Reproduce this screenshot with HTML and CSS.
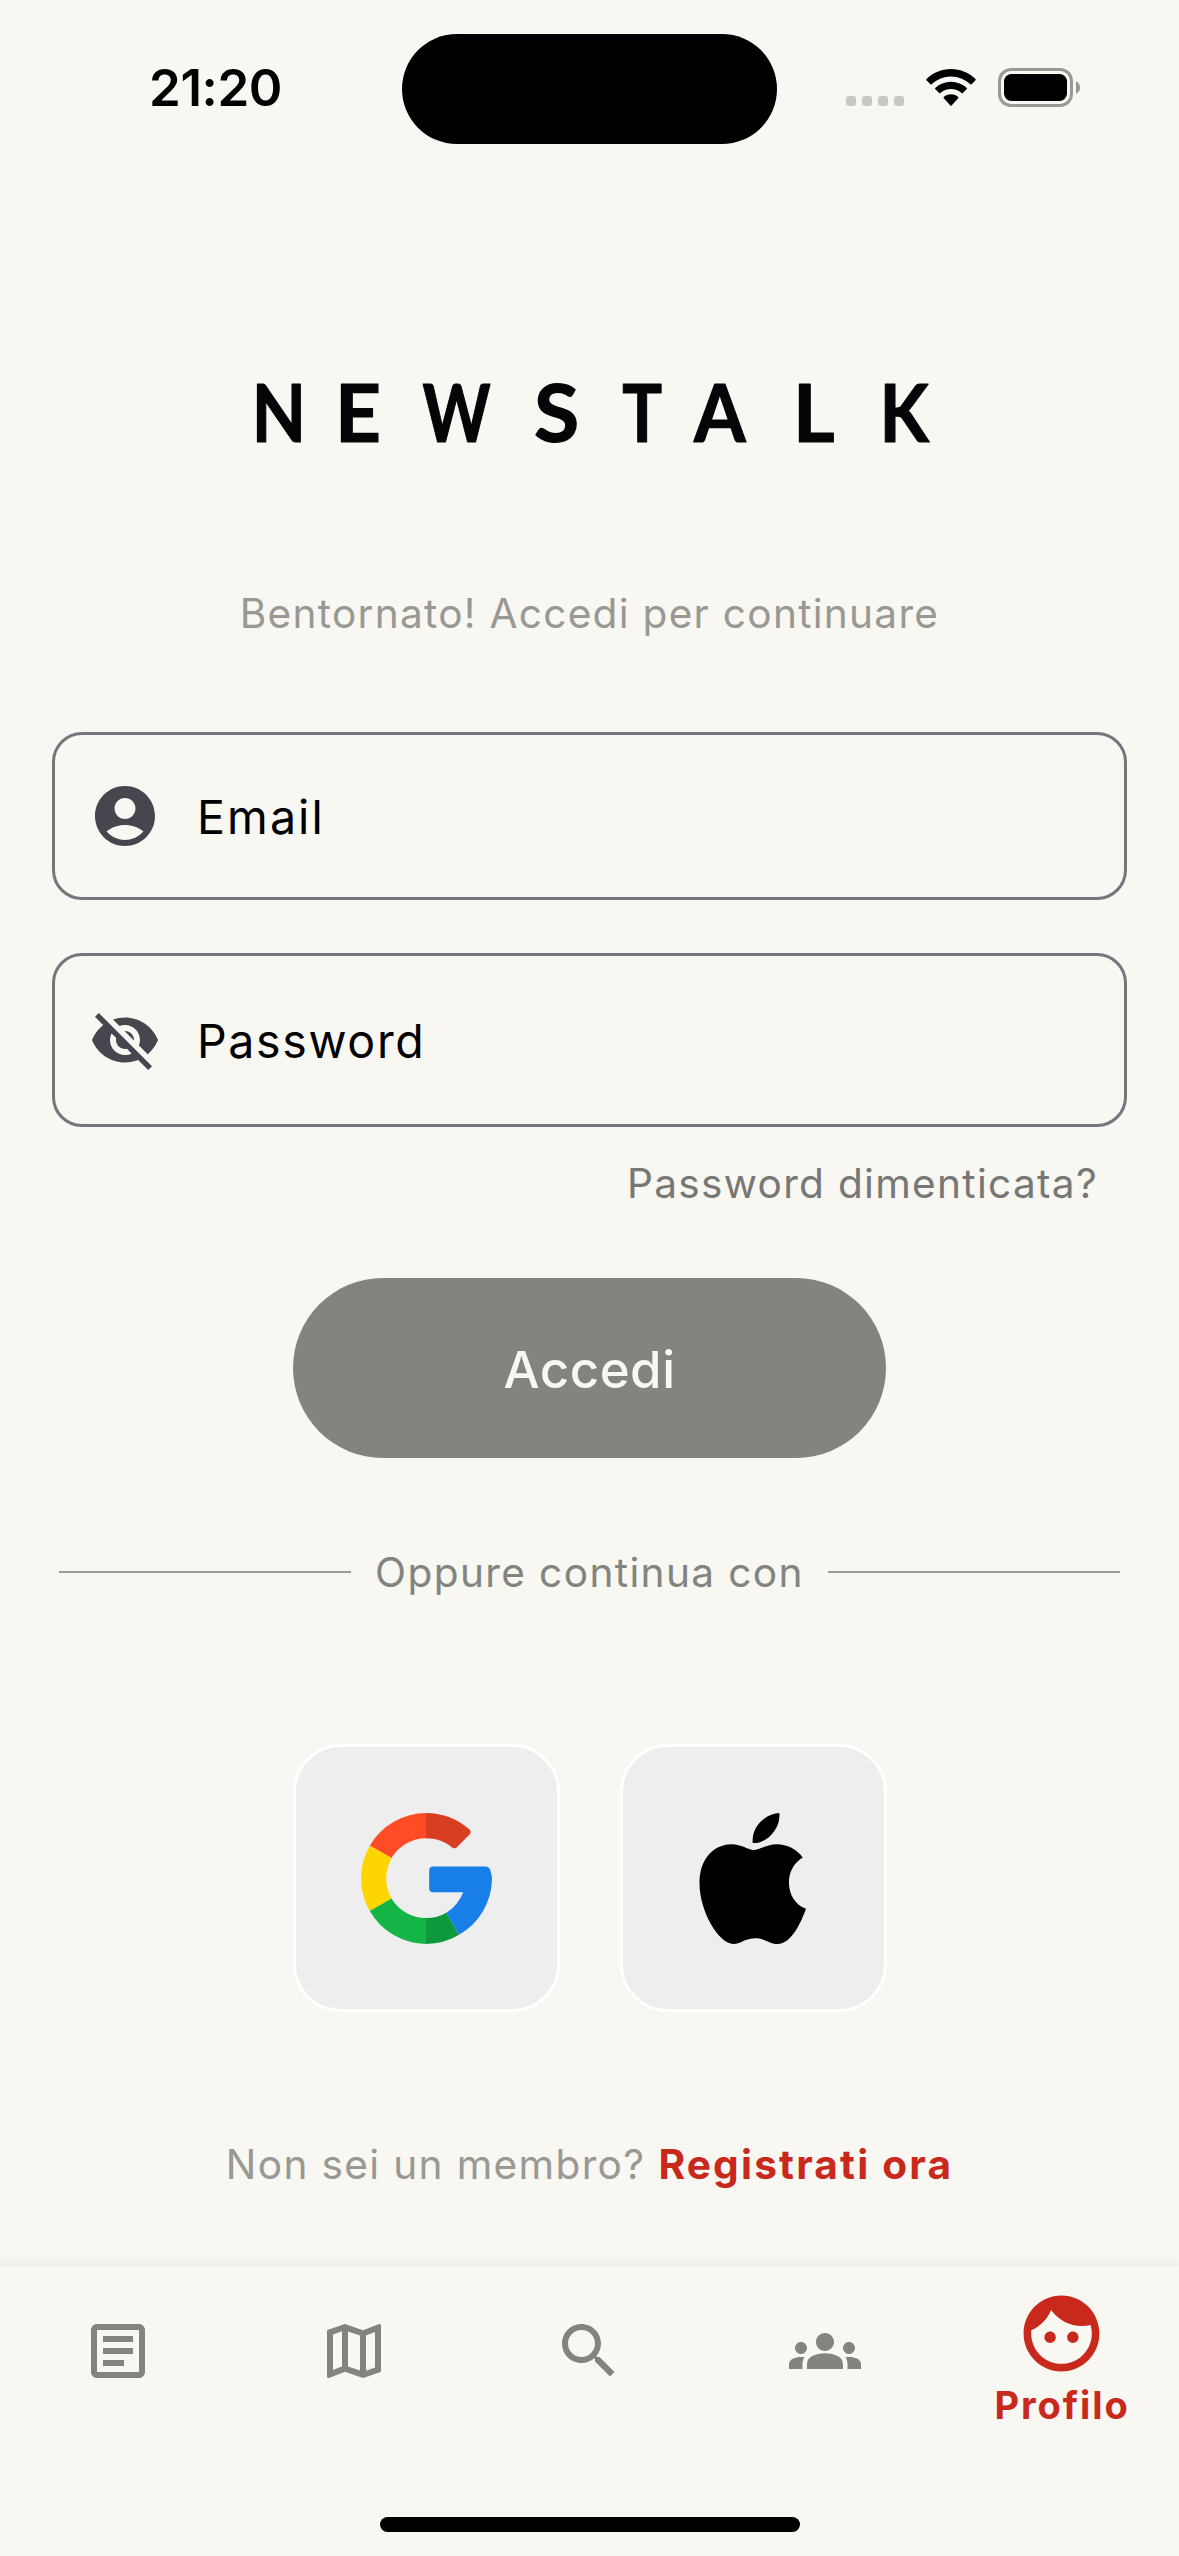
FILE: index.html
```
<!DOCTYPE html>
<html lang="it">
<head>
<meta charset="utf-8">
<title>Newstalk – Accedi</title>
<link rel="stylesheet" href="styles.css">
</head>
<body>
<div class="screen">
  <header class="status">
    <span class="status-time">21:20</span>
    <div class="island"></div>
    <div class="signal"><i></i><i></i><i></i><i></i></div>
    <svg class="wifi" width="50" height="37" viewBox="0 0 50 37">
      <path d="M25 0C34.5 0 43 3.7 49.5 10Q50 10.7 49.5 11.3L45.6 15.2Q45 15.7 44.3 15.2C39 10.2 32.3 7.4 25 7.4C17.7 7.4 11 10.2 5.7 15.2Q5 15.7 4.4 15.2L.5 11.3Q0 10.7 .5 10C7 3.7 15.5 0 25 0Z"/>
      <path d="M25 12.7C31 12.7 36.5 15 40.8 18.9Q41.3 19.5 40.8 20.1L36.8 24.1Q36.2 24.6 35.6 24.1C32.7 21.5 29 20 25 20C21 20 17.3 21.5 14.4 24.1Q13.8 24.6 13.2 24.1L9.2 20.1Q8.7 19.5 9.2 18.9C13.5 15 19 12.7 25 12.7Z"/>
      <path d="M25 25.3C27.9 25.3 30.4 26.3 32.2 28Q32.8 28.6 32.2 29.2L25.6 36.5Q25 37 24.4 36.5L17.8 29.2Q17.2 28.6 17.8 28C19.6 26.3 22.1 25.3 25 25.3Z"/>
    </svg>
    <svg class="battery" width="83" height="39" viewBox="0 0 83 39">
      <rect x="1.5" y="1.5" width="72" height="36" rx="11.5" fill="none" stroke="#999893" stroke-width="3"/>
      <rect x="6" y="6" width="63" height="27" rx="7.5"/>
      <path d="M78 13.3C80.5 14.4 82 16.800 82 19.500S80.500 24.600 78 25.700Z" fill="#999893"/>
    </svg>
  </header>

  <main class="content">
    <svg class="logo" width="690" height="110" viewBox="245 357 690 110" role="img" aria-label="NEWSTALK">
      <text transform="translate(251.7 442) scale(.88 1)">N</text>
      <text transform="translate(335 442)">E</text>
      <text transform="translate(422.5 442) scale(.81 1)">W</text>
      <text transform="translate(534 442) scale(1.03 1)">S</text>
      <text transform="translate(622.2 442) scale(.83 1)">T</text>
      <text transform="translate(694 442) scale(.93 1)">A</text>
      <text transform="translate(793 442)">L</text>
      <text transform="translate(879.6 442) scale(.9 1)">K</text>
    </svg>

    <p class="tagline">Bentornato! Accedi per continuare</p>

    <form class="form">
      <div class="field">
        <svg class="icon" viewBox="0 0 24 24"><path d="M12 2C6.48 2 2 6.48 2 12s4.48 10 10 10 10-4.48 10-10S17.52 2 12 2zm0 4c1.93 0 3.5 1.57 3.5 3.5S13.93 13 12 13s-3.5-1.57-3.5-3.5S10.07 6 12 6zm0 14c-2.03 0-4.43-.82-6.14-2.88C7.55 15.8 9.68 15 12 15s4.45.8 6.14 2.12C16.43 19.18 14.03 20 12 20z"/></svg>
        <span class="field-label email">Email</span>
      </div>
      <div class="field password-field">
        <svg class="icon" viewBox="0 0 24 24"><path d="M12 7c2.76 0 5 2.24 5 5 0 .65-.13 1.26-.36 1.83l2.92 2.92c1.51-1.26 2.7-2.89 3.43-4.75-1.73-4.39-6-7.5-11-7.5-1.4 0-2.74.25-3.98.7l2.16 2.16C10.74 7.13 11.35 7 12 7zM2 4.27l2.28 2.28.46.46C3.08 8.3 1.78 10.02 1 12c1.73 4.39 6 7.5 11 7.5 1.55 0 3.03-.3 4.38-.84l.42.42L19.73 22 21 20.73 3.27 3 2 4.27zM7.53 9.8l1.55 1.55c-.05.21-.08.43-.08.65 0 1.66 1.34 3 3 3 .22 0 .44-.03.65-.08l1.55 1.55c-.67.33-1.41.53-2.2.53-2.76 0-5-2.24-5-5 0-.79.2-1.53.53-2.2zm4.31-.78l3.15 3.15.02-.16c0-1.66-1.34-3-3-3l-.17.01z"/></svg>
        <span class="field-label">Password</span>
      </div>
      <a class="forgot">Password dimenticata?</a>
      <button class="submit" type="button">Accedi</button>
    </form>

    <div class="divider"><hr><span>Oppure continua con</span><hr></div>

    <div class="social">
      <button class="social-button" type="button" aria-label="Google">
        <svg width="131" height="131" viewBox="0 0 131 131">
          <path fill="#ff4c27" d="M8.8 32.7A65.5 65.5 0 0 1 65.5 0V25.2A40.3 40.3 0 0 0 30.5 45Z"/>
          <path fill="#d83f22" d="M65 0C82 0 97 6.2 108.3 16.3Q111 19 108.5 21.6L95.6 34.4Q93.3 36.4 90.8 34.2C83.5 28 75 25.2 65 25.2Z"/>
          <path fill="#ffd500" d="M8.8 32.7A65.5 65.5 0 0 0 8.8 98.2L30.7 85.6A40 40 0 0 1 30.7 45.2Z"/>
          <path fill="#14b447" d="M8.8 98A65.5 65.5 0 0 0 65.5 131V105A40 40 0 0 1 30.5 85.6Z"/>
          <path fill="#0f993e" d="M65 131A65.5 65.5 0 0 0 98 121.8L85.4 99.8A40 40 0 0 1 65 105Z"/>
          <path fill="#187ee8" d="M72 53.6H124Q128.3 53.6 129.3 57.3C130.3 61 131 63 131 67A65.5 65.5 0 0 1 98 121.8L85.4 99.8Q97 92.5 102.3 79.3H72Q68.2 79.3 68.2 75.5V57.4Q68.2 53.6 72 53.6Z"/>
        </svg>
      </button>
      <button class="social-button" type="button" aria-label="Apple">
        <svg width="131" height="131" viewBox="-11 0 131 131">
          <path d="M80.3 0C66.5.8 52.2 13.5 53.7 30C68 31 82 15.5 80.3 0Z"/>
          <path d="M54.7 37C49.5 37 42 31.3 32.6 31.3C16 31.3.5 44.5 .5 70.3C.5 98 19.5 131 34.5 131C42 131 46 125.3 56.3 125.3C66.5 125.3 70 131 78.4 131C93 131 102.5 108 107 95.8C96 91.8 89.9 81.5 89.9 69.3C89.9 59.5 94.8 50 103.7 44.6C98 36 88 31.2 78 31.2C67.5 31.2 60.5 37 54.7 37Z"/>
        </svg>
      </button>
    </div>

    <p class="signup"><span>Non sei un membro?</span><a>Registrati ora</a></p>
  </main>

  <nav class="nav">
    <div class="tabs">
      <a class="tab"><svg class="icon" viewBox="0 0 24 24"><path d="M19 5v14H5V5h14m0-2H5c-1.1 0-2 .9-2 2v14c0 1.1.9 2 2 2h14c1.1 0 2-.9 2-2V5c0-1.1-.9-2-2-2zM14 17H7v-2h7v2zm3-4H7v-2h10v2zm0-4H7V7h10v2z"/></svg></a>
      <a class="tab"><svg class="icon" viewBox="0 0 24 24"><path d="M20.5 3l-.16.03L15 5.1 9 3 3.36 4.9c-.21.07-.36.25-.36.48V20.5c0 .28.22.5.5.5l.16-.03L9 18.9l6 2.1 5.64-1.9c.21-.07.36-.25.36-.48V3.5c0-.28-.22-.5-.5-.5zM10 5.47l4 1.4v11.66l-4-1.4V5.47zm-5 .99l3-1.01v11.7l-3 1.16V6.46zm14 11.08l-3 1.01V6.86l3-1.16v11.84z"/></svg></a>
      <a class="tab"><svg class="icon" viewBox="0 0 24 24"><path d="M15.5 14h-.79l-.28-.27C15.41 12.59 16 11.11 16 9.5 16 5.91 13.09 3 9.5 3S3 5.91 3 9.5 5.91 16 9.5 16c1.61 0 3.09-.59 4.23-1.57l.27.28v.79l5 4.99L20.49 19l-4.99-5zm-6 0C7.01 14 5 11.99 5 9.5S7.01 5 9.5 5 14 7.01 14 9.5 11.99 14 9.5 14z"/></svg></a>
      <a class="tab"><svg class="icon" viewBox="0 0 24 24"><path d="M12 12.75c1.63 0 3.07.39 4.24.9 1.08.48 1.76 1.56 1.76 2.73V18H6v-1.61c0-1.18.68-2.26 1.76-2.73 1.17-.52 2.61-.91 4.24-.91zM4 13c1.1 0 2-.9 2-2s-.9-2-2-2-2 .9-2 2 .9 2 2 2zm1.13 1.1c-.37-.06-.74-.1-1.13-.1-.99 0-1.93.21-2.78.58C.48 14.9 0 15.62 0 16.43V18h4.5v-1.61c0-.83.23-1.61.63-2.29zM20 13c1.1 0 2-.9 2-2s-.9-2-2-2-2 .9-2 2 .9 2 2 2zm4 3.43c0-.81-.48-1.53-1.22-1.85-.85-.37-1.79-.58-2.78-.58-.39 0-.76.04-1.13.1.4.68.63 1.46.63 2.29V18H24v-1.57zM12 6c1.66 0 3 1.34 3 3s-1.34 3-3 3-3-1.34-3-3 1.34-3 3-3z"/></svg></a>
      <a class="tab active"><svg class="icon" viewBox="0 0 24 24"><path d="M9 11.5c-.83 0-1.5.67-1.5 1.5s.67 1.5 1.5 1.5 1.5-.67 1.5-1.5-.67-1.5-1.5-1.5zm6 0c-.83 0-1.5.67-1.5 1.5s.67 1.5 1.5 1.5 1.5-.67 1.5-1.5-.67-1.5-1.5-1.5z"/><path fill-rule="evenodd" d="M12 2C6.48 2 2 6.48 2 12s4.48 10 10 10 10-4.48 10-10S17.52 2 12 2zm0 18c-4.41 0-8-3.59-8-8 0-.29.02-.58.05-.86 2.36-1.05 4.23-2.98 5.21-5.37C11.07 8.33 14.05 10 17.42 10c.78 0 1.53-.09 2.25-.26.21.71.33 1.47.33 2.26 0 4.41-3.59 8-8 8z"/></svg><span>Profilo</span></a>
    </div>
    <div class="home-bar"></div>
  </nav>
</div>
</body>
</html>
```
FILE: styles.css
```
* {
  box-sizing: border-box;
}

body {
  margin: 0;
  background: #f8f7f2;
  font-family: "Inter", "Liberation Sans", sans-serif;
  color: #000;
}

p {
  margin: 0;
}

button {
  font: inherit;
  border: 0;
  padding: 0;
}

svg {
  display: block;
  flex: none;
}

.screen {
  width: 1179px;
  height: 2556px;
  display: flex;
  flex-direction: column;
  overflow: hidden;
}

/* Status bar */
.status {
  height: 144px;
  padding: 33px 0 0 149px;
  display: flex;
  align-items: center;
}

.status-time {
  width: 253px;
  padding-bottom: 2px;
  font-size: 51px;
  font-weight: 600;
  line-height: 60px;
  letter-spacing: -0.4px;
}

.island {
  width: 375px;
  height: 110px;
  margin-top: 1px;
  border-radius: 55px;
  background: #000;
}

.signal {
  display: flex;
  gap: 6px;
  margin: 24px 22px 0 69px;
}

.signal i {
  width: 10px;
  height: 10px;
  border-radius: 3px;
  background: #c8c7c3;
}

.wifi,
.battery {
  margin-bottom: 2px;
}

.battery {
  margin-left: 22px;
}

/* Login content */
.content {
  height: 2122px;
  display: flex;
  flex-direction: column;
  align-items: center;
}

.logo {
  margin-top: 213px;
}

.logo text {
  font-family: "Lato", sans-serif;
  font-size: 80px;
  font-weight: 700;
  fill: #040507;
  stroke: #040507;
  stroke-width: 1.2px;
  stroke-linejoin: round;
}

.tagline {
  margin-top: 122px;
  font-size: 40.6px;
  line-height: 50px;
  letter-spacing: 1.28px;
  color: #999892;
}

.form {
  width: 1075px;
  margin-top: 93px;
  display: flex;
  flex-direction: column;
}

.field {
  height: 168px;
  padding-left: 34px;
  display: flex;
  align-items: center;
  gap: 36px;
  border: 3px solid #79747e;
  border-radius: 30px;
}

.field .icon {
  fill: #49454f;
}

.icon {
  width: 72px;
  height: 72px;
}

.field-label {
  padding-top: 2px;
  font-size: 46.5px;
  line-height: 56px;
  letter-spacing: 1.65px;
}

.field-label.email {
  letter-spacing: 2.1px;
}

.password-field {
  height: 174px;
  margin-top: 53px;
}

.forgot {
  align-self: flex-end;
  margin: 32px 29px 0 0;
  font-size: 40.6px;
  line-height: 50px;
  letter-spacing: 1.31px;
  color: #777775;
}

.submit {
  align-self: center;
  width: 593px;
  height: 180px;
  margin-top: 69px;
  padding-top: 2px;
  border-radius: 90px;
  background: #838380;
  color: #f8f7f2;
  font-size: 51px;
  font-weight: 550;
  letter-spacing: 0.5px;
}

.divider {
  width: 1061px;
  height: 50px;
  margin-top: 89px;
  display: flex;
  align-items: center;
  gap: 24px;
  font-size: 40.6px;
  line-height: 50px;
  letter-spacing: 1.38px;
  color: #838380;
}

.divider span {
  padding-top: 2px;
}

.divider hr {
  flex: 1;
  height: 2px;
  margin: 0;
  border: 0;
  background: #9c9c98;
}

.social {
  margin-top: 147px;
  display: flex;
  gap: 60px;
}

.social-button {
  width: 267px;
  height: 268px;
  display: grid;
  place-items: center;
  border: 3px solid #fff;
  border-radius: 48px;
  background: #eee;
}

.signup {
  margin-top: 128px;
  display: flex;
  gap: 13px;
  font-size: 40.6px;
  line-height: 50px;
  letter-spacing: 1.35px;
  color: #999892;
}

.signup a {
  font-weight: 700;
  letter-spacing: 2.2px;
  color: #c9291c;
}

/* Bottom navigation */
.nav {
  height: 290px;
  background: #f8f7f2;
  box-shadow: 0 -1px 9px 2px rgba(0, 0, 0, 0.06);
}

.tabs {
  height: 251px;
  display: grid;
  grid-template-columns: repeat(5, 1fr);
}

.tab {
  padding-top: 49px;
  display: flex;
  flex-direction: column;
  align-items: center;
  fill: #838380;
}

.tab.active {
  padding-top: 22px;
  gap: 3px;
  fill: #c9291c;
  color: #c9291c;
  font-size: 38px;
  font-weight: 700;
  line-height: 46px;
  letter-spacing: 1.9px;
}

.tab.active span {
  padding-left: 2px;
}

.tab.active .icon {
  width: 91px;
  height: 91px;
}

.home-bar {
  width: 420px;
  height: 15px;
  margin: 0 auto;
  border-radius: 8px;
  background: #000;
}
```
